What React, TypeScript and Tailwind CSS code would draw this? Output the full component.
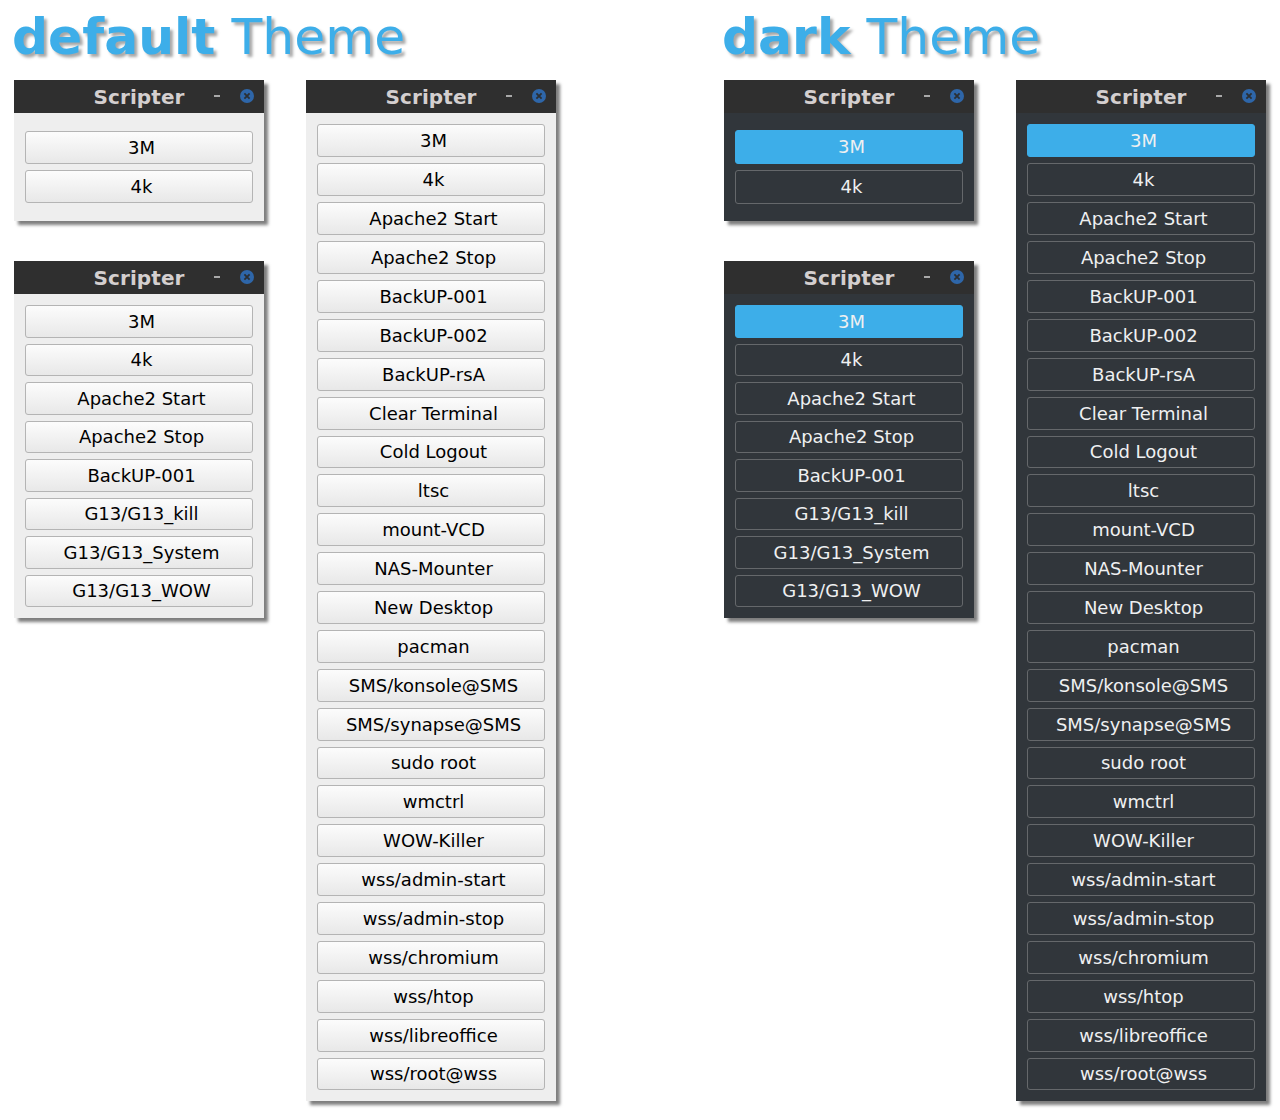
const shortList = ["3M", "4k", "Apache2 Start", "Apache2 Stop", "BackUP-001", "G13/G13_kill", "G13/G13_System", "G13/G13_WOW"];
const longList = ["3M", "4k", "Apache2 Start", "Apache2 Stop", "BackUP-001", "BackUP-002", "BackUP-rsA", "Clear Terminal", "Cold Logout", "ltsc", "mount-VCD", "NAS-Mounter", "New Desktop", "pacman", "SMS/konsole@SMS", "SMS/synapse@SMS", "sudo root", "wmctrl", "WOW-Killer", "wss/admin-start", "wss/admin-stop", "wss/chromium", "wss/htop", "wss/libreoffice", "wss/root@wss"];

function ScriptButton({ label, dark, active, rowClass }: { label: string; dark: boolean; active: boolean; rowClass: string }) {
  let look = "border-[#b4b4b4] bg-gradient-to-b from-[#fcfcfc] to-[#e8e8e8] text-black";
  if (dark) look = "border-[#65686b] bg-[#31363b] text-[#eff0f1]";
  if (active) look = "border-[#3daee9] bg-[#3daee9] text-[#eff0f1]";
  return (
    <div className={`flex items-center justify-center rounded-[3px] border pl-[5px] text-[18px] leading-none ${rowClass} ${look}`}>
      {label}
    </div>
  );
}

function ScripterWindow({ items, dark, padY, rowClass }: { items: string[]; dark: boolean; padY: string; rowClass: (i: number) => string }) {
  return (
    <div className={`flex w-[250px] flex-col shadow-[4px_4px_3px_rgba(0,0,0,0.5)] ${dark ? "bg-[#31363b]" : "bg-[#eeeeee]"}`}>
      <div className="flex h-[33px] shrink-0 items-center bg-[#2f2f2f]">
        <div className="w-[70px]" />
        <span className="flex-1 text-center text-[20px] font-bold tracking-[0.1px] text-[#d4cfcf]">Scripter</span>
        <div className="mb-[1px] flex w-[70px] items-center pr-[10px] pl-[20px]">
          <span className="h-[2px] w-[6px] bg-[#a9a9a9]" />
          <svg className="ml-auto" width="14" height="14" viewBox="0 0 14 14">
            <circle cx="7" cy="7" r="7" fill="#2e66a9" />
            <path d="M4.4 4.4 9.6 9.6M9.6 4.4 4.4 9.6" stroke="#2b2f33" strokeWidth="1.8" />
          </svg>
        </div>
      </div>
      <div className={`flex flex-col gap-[6px] px-[11px] ${padY}`}>
        {items.map((label, i) => (
          <ScriptButton key={label} label={label} dark={dark} active={dark && i === 0} rowClass={rowClass(i)} />
        ))}
      </div>
    </div>
  );
}

function ThemeColumn({ name, dark }: { name: string; dark: boolean }) {
  return (
    <div className="w-[542px]">
      <h1 className="-ml-[2px] h-[80px] pt-[2px] text-[50.4px] leading-[70px] text-[#3daee9] [text-shadow:3px_3px_3px_rgba(0,0,0,0.35)]">
        <span className="font-bold">{name}</span> Theme
      </h1>
      <div className="flex gap-[42px]">
        <div className="flex flex-col gap-[40px]">
          <ScripterWindow
            items={shortList.slice(0, 2)}
            dark={dark}
            padY={dark ? "py-[17px]" : "py-[18px]"}
            rowClass={() => (dark ? "h-[34px]" : "h-[33px] pt-[1px]")}
          />
          <ScripterWindow
            items={shortList}
            dark={dark}
            padY="py-[11px]"
            rowClass={(i) => (i % 2 === 1 ? "h-[32px]" : "h-[33px] pt-[1px]")}
          />
        </div>
        <ScripterWindow
          items={longList}
          dark={dark}
          padY="py-[11px]"
          rowClass={(i) => (i === 8 || i === 16 || i === 24 ? "h-[32px]" : "h-[33px] pt-[1px]")}
        />
      </div>
    </div>
  );
}

export default function App() {
  return (
    <div className="flex h-[1120px] w-[1280px] gap-[168px] bg-white pl-[14px] font-['DejaVu_Sans',sans-serif]">
      <ThemeColumn name="default" dark={false} />
      <ThemeColumn name="dark" dark={true} />
    </div>
  );
}
